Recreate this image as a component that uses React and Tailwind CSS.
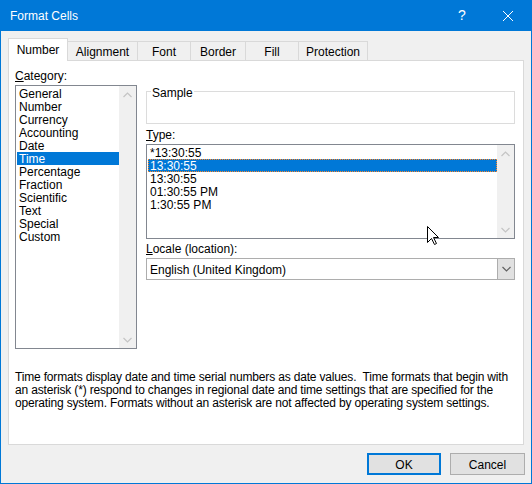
import React from 'react'

const categories = ['General', 'Number', 'Currency', 'Accounting', 'Date', 'Time', 'Percentage', 'Fraction', 'Scientific', 'Text', 'Special', 'Custom']
const types = ['*13:30:55', '13:30:55', '13:30:55', '01:30:55 PM', '1:30:55 PM']

const tabs = [
    { label: 'Alignment', w: 'w-[71px]' },
    { label: 'Font', w: 'w-[54px]' },
    { label: 'Border', w: 'w-[56px]' },
    { label: 'Fill', w: 'w-[54px]' },
    { label: 'Protection', w: 'w-[70px]' },
]

function Chevron({ up, dark }) {
    return (
        <svg width="9" height="6" viewBox="0 0 9 6" className="block">
            <polyline
                points={up ? '0.5,5 4.5,1 8.5,5' : '0.5,1 4.5,5 8.5,1'}
                fill="none"
                stroke={dark ? '#606060' : '#c4c4c4'}
                strokeWidth="1.2"
            />
        </svg>
    )
}

function ScrollBar() {
    return (
        <div className="w-[17px] h-full bg-[#f0f0f0] flex flex-col justify-between shrink-0">
            <div className="h-[17px] flex items-center justify-center"><Chevron up /></div>
            <div className="h-[17px] flex items-center justify-center"><Chevron /></div>
        </div>
    )
}

function Cursor() {
    return (
        <svg width="13" height="20" viewBox="0 0 13 20" className="absolute left-[426px] top-[226px]">
            <path d="M0.5 0.5 L0.5 16.5 L4.5 12.5 L7.5 18.5 L9.5 17.5 L6.5 11.5 L11.5 11.5 Z" fill="#fff" stroke="#000" strokeWidth="1" />
        </svg>
    )
}

export default function App() {
    return (
        <div className="relative w-[532px] h-[484px] bg-[#f0f0f0] border-x border-b border-[#0078d7] flex flex-col text-[12px] text-black overflow-hidden"
            style={{ fontFamily: '"Segoe UI", "Liberation Sans", Arial, sans-serif' }}>
            {/* Title bar */}
            <div className="h-[31px] bg-[#0078d7] flex items-center text-white shrink-0">
                <span className="pl-[9px] flex-1 text-[12px]">Format Cells</span>
                <div className="w-[46px] h-full flex items-center justify-center text-[14px] font-light">?</div>
                <div className="w-[46px] h-full flex items-center justify-center">
                    <svg width="10" height="10" viewBox="0 0 10 10">
                        <path d="M0 0 L10 10 M10 0 L0 10" stroke="#fff" strokeWidth="1" />
                    </svg>
                </div>
            </div>

            {/* Tabs */}
            <div className="mt-[7px] ml-[7px] h-[22px] flex items-end">
                <div className="relative z-10 w-[60px] h-[23px] -mb-px bg-white border-x border-t border-[#d9d9d9] flex items-center justify-center">
                    Number
                </div>
                {tabs.map((t) => (
                    <div key={t.label} className={`${t.w} h-[19px] -ml-px border-x border-t border-[#d9d9d9] flex items-center justify-center pt-px`}>
                        {t.label}
                    </div>
                ))}
            </div>

            {/* Panel */}
            <div className="ml-[7px] w-[516px] h-[385px] bg-white border border-[#d9d9d9] flex flex-col shrink-0">
                <div className="flex px-[6px] gap-[9px]">
                    {/* Category */}
                    <div className="w-[122px] flex flex-col">
                        <div className="mt-[7px] h-[15px] leading-[17px]"><u className="underline-offset-1">C</u>ategory:</div>
                        <div className="mt-[2px] h-[264px] border border-[#828790] flex">
                            <div className="flex-1 pt-px pl-px">
                                {categories.map((c) => (
                                    <div key={c} className={`h-[13px] leading-[15px] pl-[2px] ${c === 'Time' ? 'bg-[#0078d7] text-white' : ''}`}>{c}</div>
                                ))}
                            </div>
                            <ScrollBar />
                        </div>
                    </div>

                    {/* Right column */}
                    <div className="w-[369px] flex flex-col">
                        <div className="relative mt-[30px] h-[33px] border border-[#dcdcdc]">
                            <span className="absolute left-[4px] top-[-6px] px-px bg-white leading-[14px]">Sample</span>
                        </div>
                        <div className="mt-[3px] h-[15px] leading-[17px]"><u className="underline-offset-1">T</u>ype:</div>
                        <div className="mt-[2px] h-[95px] border border-[#828790] flex">
                            <div className="flex-1 pt-px pl-px">
                                {types.map((t, i) => (
                                    <div key={i} className={`h-[13px] leading-[13px] pl-px border border-transparent ${i === 1 ? 'bg-[#0078d7] text-white border-dotted !border-[#ff8728]' : ''}`}>{t}</div>
                                ))}
                            </div>
                            <ScrollBar />
                        </div>
                        <div className="mt-[2px] h-[15px] leading-[17px]"><u className="underline-offset-1">L</u>ocale (location):</div>
                        <div className="mt-[2px] h-[22px] border border-[#adadad] flex">
                            <div className="flex-1 pl-[3px] pt-px flex items-center">English (United Kingdom)</div>
                            <div className="w-[17px] bg-[#e1e1e1] border-l border-[#adadad] flex items-center justify-center">
                                <Chevron dark />
                            </div>
                        </div>
                    </div>
                </div>

                <p className="mt-[22px] ml-[6px] leading-[13px] whitespace-pre tracking-[-0.17px]">
                    {'Time formats display date and time serial numbers as date values.  Time formats that begin with\nan asterisk (*) respond to changes in regional date and time settings that are specified for the\noperating system. Formats without an asterisk are not affected by operating system settings.'}
                </p>
            </div>

            {/* Buttons */}
            <div className="mt-[8px] mr-[6px] flex justify-end gap-[9px]">
                <button className="w-[74px] h-[22px] bg-[#e1e1e1] border-2 border-[#0078d7] pt-px">OK</button>
                <button className="w-[75px] h-[22px] bg-[#e1e1e1] border border-[#adadad] pt-px">Cancel</button>
            </div>

            <Cursor />
        </div>
    )
}
